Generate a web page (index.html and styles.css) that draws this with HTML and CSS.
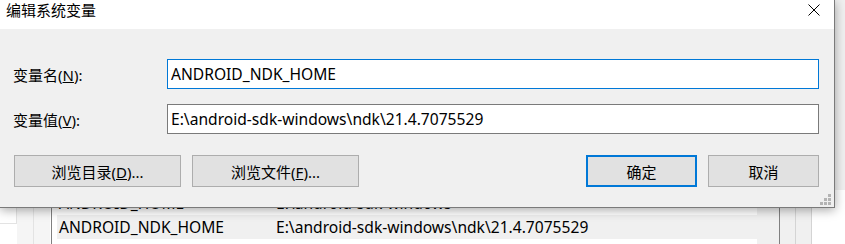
FILE: index.html
```html
<!DOCTYPE html>
<html lang="zh-CN">
<head>
    <meta charset="UTF-8">
    <title>编辑系统变量</title>
    <link rel="stylesheet" href="styles.css">
</head>
<body>
    <div class="desktop">
        <!-- window behind the dialog -->
        <div class="back-window">
            <div class="gutter">
                <div class="gutter-cell first"></div>
                <div class="gutter-cell"></div>
                <div class="gutter-cell"></div>
            </div>
            <div class="var-list">
                <div class="var-row">
                    <span class="var-name">ANDROID_HOME</span>
                    <span class="var-value">E:\android-sdk-windows</span>
                </div>
                <div class="var-row selected">
                    <span class="var-name">ANDROID_NDK_HOME</span>
                    <span class="var-value">E:\android-sdk-windows\ndk\21.4.7075529</span>
                </div>
            </div>
            <div class="side-pane">
                <div class="pane-col"></div>
                <div class="pane-col"></div>
            </div>
        </div>

        <div class="dialog">
            <div class="title-bar">
                <span class="title">编辑系统变量</span>
                <button class="close-btn" aria-label="关闭">
                    <svg width="12" height="12" viewBox="0 0 12 12">
                        <path d="M0.5 0.5 L11.5 11.5 M11.5 0.5 L0.5 11.5" stroke="#000" stroke-width="1" fill="none"/>
                    </svg>
                </button>
            </div>
            <div class="dialog-body">
                <div class="field-row">
                    <label for="varName">变量名(<u>N</u>):</label>
                    <input type="text" id="varName" class="focused" value="ANDROID_NDK_HOME">
                </div>
                <div class="field-row">
                    <label for="varValue">变量值(<u>V</u>):</label>
                    <input type="text" id="varValue" value="E:\android-sdk-windows\ndk\21.4.7075529">
                </div>
                <div class="button-row">
                    <button class="btn btn-wide">浏览目录(<u>D</u>)...</button>
                    <button class="btn btn-wide">浏览文件(<u>F</u>)...</button>
                    <div class="spacer"></div>
                    <button class="btn btn-default">确定</button>
                    <button class="btn">取消</button>
                </div>
            </div>
            <svg class="grip" width="11" height="11" viewBox="0 0 11 11">
                <rect x="8" y="0" width="3" height="3" fill="#b4b4b4"/>
                <rect x="4" y="4" width="3" height="3" fill="#b4b4b4"/>
                <rect x="8" y="4" width="3" height="3" fill="#b4b4b4"/>
                <rect x="0" y="8" width="3" height="3" fill="#b4b4b4"/>
                <rect x="4" y="8" width="3" height="3" fill="#b4b4b4"/>
                <rect x="8" y="8" width="3" height="3" fill="#b4b4b4"/>
            </svg>
        </div>
    </div>
</body>
</html>
```

FILE: styles.css
```css
body {
    margin: 0;
    overflow: hidden;
    font-family: "Segoe UI", "Noto Sans", "Noto Sans CJK SC", sans-serif;
    font-size: 15px;
    color: #000;
}
.desktop {
    position: relative;
    width: 845px;
    height: 244px;
    background-color: #f0f0f0;
}

/* Window behind */
.back-window {
    position: absolute;
    left: 0;
    top: 190px;
    right: 0;
    bottom: 0;
    display: flex;
    background-color: #fff;
}
.gutter {
    display: flex;
    width: 51px;
    border-right: 1px solid #808080;
}
.gutter-cell {
    width: 16px;
    border-right: 1px solid #e3e3e3;
    background-color: #f5f5f5;
}
.gutter-cell.first {
    background-color: #fff;
    height: 33px;
    border-bottom: 1px solid #e3e3e3;
}
.gutter-cell:last-child {
    border-right: none;
}
.var-list {
    width: 727px;
    padding: 1px 22px 0 5px;
    box-sizing: border-box;
    background: linear-gradient(to right, #fff 705px, #f0f0f0 705px);
    font-size: 15.6px;
}
.var-row {
    display: flex;
    align-items: center;
    height: 24px;
}
.var-row.selected {
    background-color: #f0f0f0;
}
.var-name {
    width: 217px;
    padding-left: 2px;
}
.side-pane {
    display: flex;
    border-left: 1px solid #808080;
}
.pane-col {
    width: 15px;
    background-color: #f0f0f0;
    border-right: 1px solid #d4d4d4;
}

/* Dialog */
.dialog {
    position: relative;
    width: 835px;
    height: 208px;
    box-sizing: border-box;
    background-color: #f0f0f0;
    border-right: 1px solid #7a7a7a;
    border-bottom: 1px solid #7a7a7a;
    box-shadow: 0 2px 10px rgba(0, 0, 0, 0.35);
}
.title-bar {
    display: flex;
    justify-content: space-between;
    height: 29px;
    background-color: #fff;
    padding-left: 6px;
}
.title {
    line-height: 20px;
}
.close-btn {
    background: none;
    border: none;
    padding: 0;
    margin: 4px 14px 0 0;
    width: 12px;
    height: 12px;
    display: flex;
}
.dialog-body {
    padding: 30px 15px 0 13px;
}
.field-row {
    display: flex;
    align-items: center;
    margin-bottom: 15px;
}
.field-row label {
    width: 154px;
}
.field-row input {
    flex: 1;
    height: 30px;
    box-sizing: border-box;
    border: 1px solid #7a7a7a;
    padding: 0 3px;
    font-family: inherit;
    font-size: 15.6px;
    outline: none;
    background-color: #fff;
}
.field-row input.focused {
    border-color: #0078d7;
}
.button-row {
    display: flex;
    gap: 11px;
    margin-top: 21px;
    padding-left: 1px;
}
.spacer {
    flex: 1;
}
.btn {
    height: 32px;
    width: 111px;
    background-color: #e1e1e1;
    border: 1px solid #adadad;
    font-family: inherit;
    font-size: 15px;
    color: #000;
    padding: 0;
}
.btn-wide {
    width: 167px;
}
.btn-default {
    border: 2px solid #0078d7;
}
.grip {
    position: absolute;
    right: 3px;
    bottom: 2px;
}
```
